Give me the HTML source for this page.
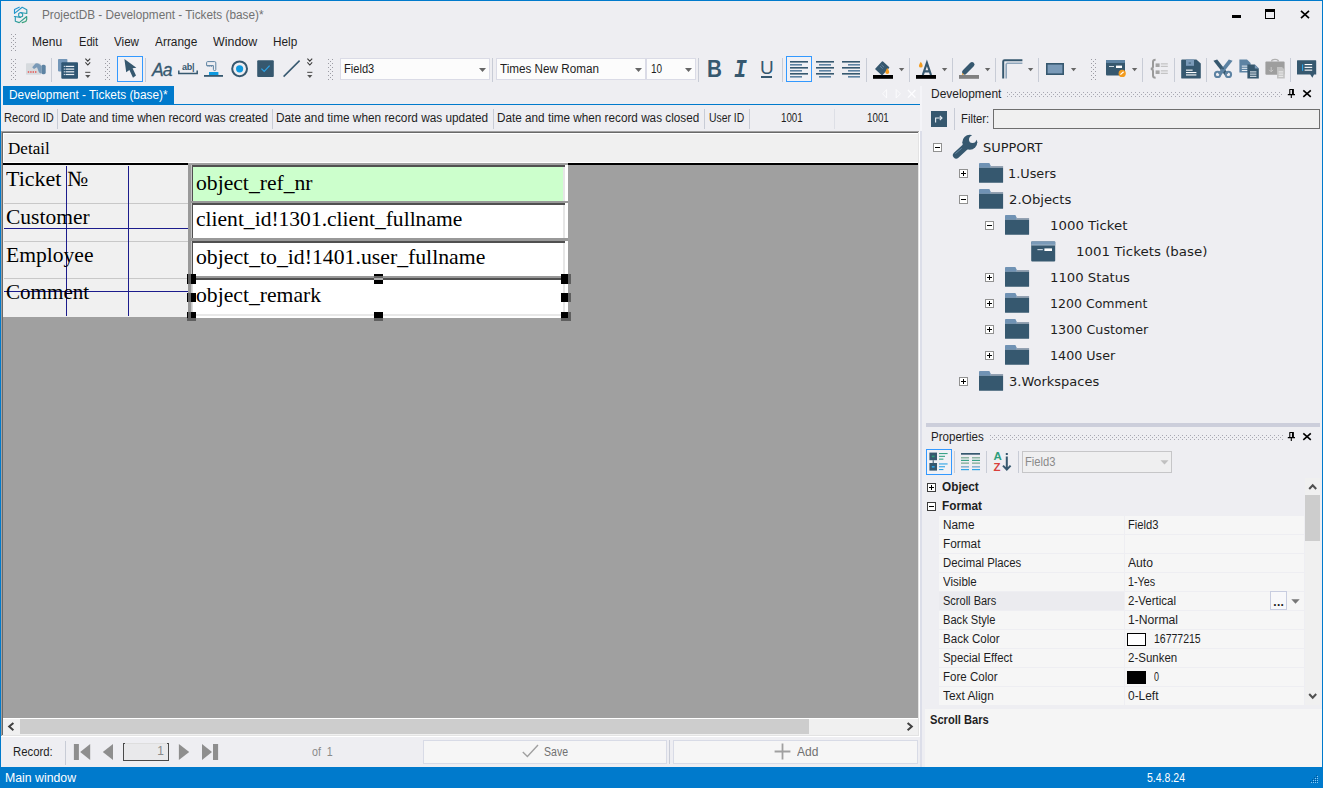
<!DOCTYPE html>
<html><head><meta charset="utf-8"><title>ProjectDB - Development - Tickets (base)*</title>
<style>
html,body{margin:0;padding:0;}
body{width:1323px;height:788px;overflow:hidden;background:#eeeef2;font-family:"Liberation Sans",sans-serif;font-size:12px;color:#1e1e1e;position:relative;}
.a{position:absolute;}
.t{position:absolute;white-space:nowrap;line-height:16px;height:16px;}
.sep{position:absolute;width:1px;background:#c8ccd6;}
.serif{font-family:"Liberation Serif",serif;color:#000;}
.tree{font-family:"DejaVu Sans",sans-serif;font-size:13px;color:#1e1e1e;}
svg{position:absolute;overflow:visible;}
.cell{position:absolute;background:#f6f6f6;height:18px;}
.pn{position:absolute;left:942px;white-space:nowrap;line-height:16px;}
.pv{position:absolute;left:1128px;white-space:nowrap;line-height:16px;}
.h{position:absolute;background:#000;}
</style></head><body>
<svg width="0" height="0" style="left:0;top:0"><defs>
<pattern id="gp" width="4" height="4" patternUnits="userSpaceOnUse"><rect x="0" y="0" width="1" height="1" fill="#9c9ca4"></rect><rect x="2" y="2" width="1" height="1" fill="#9c9ca4"></rect></pattern>
<pattern id="gp2" width="4" height="4" patternUnits="userSpaceOnUse"><rect x="0" y="0" width="1" height="1" fill="#a8a8b2"></rect><rect x="2" y="2" width="1" height="1" fill="#a8a8b2"></rect></pattern>
</defs></svg>
<!-- window border -->
<div class="a" style="left:0;top:0;width:1323px;height:1px;background:#007acc"></div>
<div class="a" style="left:0;top:0;width:1px;height:788px;background:#007acc"></div>
<div class="a" style="left:1322px;top:0;width:1px;height:788px;background:#007acc"></div>

<!-- TITLE BAR -->
<div id="titlebar">
<svg style="left:8px;top:2px" width="30" height="26" viewBox="0 0 30 26"><defs><linearGradient id="lg" gradientUnits="userSpaceOnUse" x1="6" y1="5" x2="19" y2="21"><stop offset="0" stop-color="#1c92e0"></stop><stop offset="0.5" stop-color="#2a9bb4"></stop><stop offset="1" stop-color="#3aa266"></stop></linearGradient></defs>
<g fill="none" stroke="url(#lg)" stroke-width="1.15" stroke-linejoin="round" stroke-linecap="round"><path d="M11.2 5.2 L6.5 7.5 V11.4 L14.2 5.3 L18.8 7.7 V11.5 L12.4 10.5"></path><path d="M10.7 11.5 L12.6 10.6 L14.6 11.7 V14.2 L12.4 15.3 L10.7 14.3 Z"></path><path d="M6.4 14.5 L12.4 15.4"></path><path d="M7.3 14.8 V19.3 L11.2 20.6 L18.7 14.5 V17.4 L17.8 19.5 L14.2 20.6"></path></g></svg>

<div class="t" id="title" style="left: 42.3px; top: 7px; color: rgb(113, 113, 113); transform: scaleX(0.9826); transform-origin: 0px 50%;">ProjectDB - Development - Tickets (base)*</div>
<div class="a" style="left:1232px;top:15px;width:9px;height:3px;background:#000"></div>
<div class="a" style="left:1265px;top:9px;width:8px;height:6px;border:1px solid #000;border-top:3px solid #000"></div>
<svg style="left:1300px;top:10px" width="10" height="9" viewBox="0 0 10 9"><path d="M1 0.8 L9 8.2 M9 0.8 L1 8.2" stroke="#000" stroke-width="1.7"></path></svg>
</div>

<!-- MENU -->
<div id="menubar">
<svg style="left:11px;top:34px" width="5" height="17"><rect width="5" height="17" fill="url(#gp)"></rect></svg>
<div class="t" style="left: 31.5px; top: 34px; transform: scaleX(1.0023); transform-origin: 0px 50%;">Menu</div>
<div class="t" style="left: 78.7px; top: 34px; transform: scaleX(0.9233); transform-origin: 0px 50%;">Edit</div>
<div class="t" style="left: 114px; top: 34px; transform: scaleX(0.9691); transform-origin: 0px 50%;">View</div>
<div class="t" style="left: 155px; top: 34px; transform: scaleX(0.9906); transform-origin: 0px 50%;">Arrange</div>
<div class="t" style="left: 212.8px; top: 34px; transform: scaleX(1.0354); transform-origin: 0px 50%;">Window</div>
<div class="t" style="left: 273.2px; top: 34px; transform: scaleX(0.9803); transform-origin: 0px 50%;">Help</div>
</div>

<!-- TOOLBAR -->
<div id="toolbar">
<!-- grips -->
<svg style="left:11px;top:59px" width="5" height="22"><rect width="5" height="22" fill="url(#gp)"></rect></svg>
<svg style="left:105px;top:59px" width="5" height="22"><rect width="5" height="22" fill="url(#gp)"></rect></svg>
<svg style="left:328px;top:59px" width="5" height="22"><rect width="5" height="22" fill="url(#gp)"></rect></svg>
<svg style="left:1091px;top:59px" width="5" height="22"><rect width="5" height="22" fill="url(#gp)"></rect></svg>
<!-- separators -->
<div class="sep" style="left:51px;top:58px;height:24px"></div>
<div class="sep" style="left:145px;top:58px;height:24px"></div>
<div class="sep" style="left:492px;top:58px;height:24px"></div>
<div class="sep" style="left:698px;top:58px;height:24px"></div>
<div class="sep" style="left:782px;top:58px;height:24px"></div>
<div class="sep" style="left:866px;top:58px;height:24px"></div>
<div class="sep" style="left:909px;top:58px;height:24px"></div>
<div class="sep" style="left:952px;top:58px;height:24px"></div>
<div class="sep" style="left:995px;top:58px;height:24px"></div>
<div class="sep" style="left:1038px;top:58px;height:24px"></div>
<div class="sep" style="left:1142px;top:58px;height:24px"></div>
<div class="sep" style="left:1174px;top:58px;height:24px"></div>
<div class="sep" style="left:1206px;top:58px;height:24px"></div>
<div class="sep" style="left:1290px;top:58px;height:24px"></div>
<!-- login icon (disabled) -->
<svg style="left:26px;top:61px" width="20" height="16" viewBox="0 0 20 16"><rect x="0" y="2.3" width="15" height="11.4" rx="0.8" fill="#d6dade"></rect><path d="M1.8 10.3h1.4v1.4H1.8zM4.2 10.3h1.4v1.4H4.2zM6.6 10.3h1.4v1.4H6.6zM9 10.3h1.4v1.4H9z" fill="#e8534f"></path><path d="M6.2 6.2 L9.5 2.6 Q11.5 1.8 13.5 3.2 L15 4.6 L15 12.5 L13 11.5 L11 6.2 L8 8 Z" fill="#7a9ab8"></path><rect x="15.3" y="3.8" width="4.4" height="9.4" rx="1.6" fill="#5d83a3"></rect></svg>
<!-- forms list icon -->
<svg style="left:58px;top:59px" width="20" height="20" viewBox="0 0 20 20"><rect x="0" y="0" width="9.4" height="12.4" rx="0.8" fill="#7396b8"></rect><rect x="3.3" y="3.2" width="16.7" height="16.6" rx="1" fill="#2f5673"></rect><g fill="#e8eef4"><rect x="7.6" y="6.8" width="8.6" height="1.2"></rect><rect x="7.6" y="9.5" width="8.6" height="1.2"></rect><rect x="7.6" y="12.2" width="8.6" height="1.2"></rect><rect x="7.6" y="14.9" width="8.6" height="1.2"></rect><rect x="5.8" y="6.8" width="1" height="1.2"></rect><rect x="5.8" y="9.5" width="1" height="1.2"></rect><rect x="5.8" y="12.2" width="1" height="1.2"></rect><rect x="5.8" y="14.9" width="1" height="1.2"></rect></g></svg>
<!-- overflow chevrons 1 -->
<svg style="left:84px;top:58px" width="8" height="22" viewBox="0 0 8 22"><path d="M1.4 0.6 L3.8 3.2 L6.2 0.6 M1.4 4.4 L3.8 7 L6.2 4.4" stroke="#3c3c3c" stroke-width="1.1" fill="none"></path><rect x="1.2" y="13.8" width="5.2" height="1.1" fill="#555"></rect><path d="M1.2 17 L6.4 17 L3.8 20 Z" fill="#555"></path></svg>
<!-- pointer selected -->
<div class="a" style="left:117px;top:56px;width:24px;height:24px;border:1px solid #3399ff;background:#f1f1f5"></div>
<svg style="left:123px;top:58px" width="14" height="21" viewBox="0 0 14 21"><path d="M1.4 1 L3.2 14.2 L6.4 12 L10 19.8 L13 17.6 L9.6 10.2 L13.4 9.8 Z" fill="#36586f"></path></svg>
<!-- Aa -->
<div class="t" style="left:152px;top:57.5px;font-size:17.5px;line-height:24px;height:24px;font-style:italic;color:#36586f;letter-spacing:-1px;-webkit-text-stroke:0.3px #36586f">Aa</div>
<!-- ab| textbox -->
<div class="t" style="left:182px;top:61px;font-size:9px;line-height:12px;height:12px;font-weight:bold;color:#36586f;letter-spacing:-0.2px">ab|</div>
<svg style="left:178px;top:70px" width="20" height="5" viewBox="0 0 20 5"><path d="M0.8 0.5 V3.6 H19.2 V0.5" stroke="#36586f" stroke-width="1.5" fill="none"></path></svg>
<!-- button icon -->
<svg style="left:204px;top:60px" width="20" height="18" viewBox="0 0 20 18"><rect x="0" y="15" width="19" height="1.8" fill="#36586f"></rect><rect x="5" y="12" width="9.4" height="3" fill="#0e9ae0"></rect><path d="M2.6 5.6 V2.6 Q2.6 1.6 3.6 1.6 H10.6 Q11.8 1.6 11.8 2.8 V9.6 Q11.8 10.6 10.6 10.6 Q9.4 10.6 9.4 9.4 V5.6 Z" stroke="#5d83a3" stroke-width="1" fill="none"></path><path d="M4 5.6V7M5.8 5.6V7M7.6 5.6V7" stroke="#5d83a3" stroke-width="0.8"></path></svg>
<!-- radio -->
<svg style="left:230px;top:59px" width="20" height="20" viewBox="0 0 20 20"><circle cx="9.6" cy="9.8" r="7.4" stroke="#36586f" stroke-width="2" fill="none"></circle><circle cx="9.6" cy="9.8" r="3.6" fill="#0e9ae0"></circle></svg>
<!-- checkbox -->
<svg style="left:257px;top:60px" width="18" height="18" viewBox="0 0 18 18"><rect x="0.2" y="0.3" width="16.6" height="16.6" rx="1" fill="#36586f"></rect><path d="M4.4 8.6 L7.2 11.4 L12.6 5.6" stroke="#2ea3e6" stroke-width="1.2" fill="none"></path></svg>
<!-- line -->
<svg style="left:282px;top:59px" width="20" height="20" viewBox="0 0 20 20"><path d="M1.6 17.6 L17.6 1.6" stroke="#36586f" stroke-width="1.5"></path></svg>
<!-- overflow chevrons 2 -->
<svg style="left:306px;top:58px" width="8" height="22" viewBox="0 0 8 22"><path d="M1.4 0.6 L3.8 3.2 L6.2 0.6 M1.4 4.4 L3.8 7 L6.2 4.4" stroke="#3c3c3c" stroke-width="1.1" fill="none"></path><rect x="1.2" y="13.8" width="5.2" height="1.1" fill="#555"></rect><path d="M1.2 17 L6.4 17 L3.8 20 Z" fill="#555"></path></svg>
<!-- combos -->
<div class="a" style="left:340px;top:58px;width:148px;height:20px;border:1px solid #dadbe6;background:#fcfcfc"></div>
<div class="t" style="left: 343.5px; top: 61px; transform: scaleX(0.927); transform-origin: 0px 50%;">Field3</div>
<svg style="left:478px;top:67px" width="9" height="5" viewBox="0 0 9 5"><path d="M1 0.9 H8 L4.5 4.9 Z" fill="#666"></path></svg>
<div class="a" style="left:496px;top:58px;width:148px;height:20px;border:1px solid #dadbe6;background:#fcfcfc"></div>
<div class="t" style="left: 500.3px; top: 61px; transform: scaleX(0.9736); transform-origin: 0px 50%;">Times New Roman</div>
<svg style="left:634px;top:67px" width="9" height="5" viewBox="0 0 9 5"><path d="M1 0.9 H8 L4.5 4.9 Z" fill="#666"></path></svg>
<div class="a" style="left:646px;top:58px;width:48px;height:20px;border:1px solid #dadbe6;background:#fcfcfc"></div>
<div class="t" style="left: 650.5px; top: 61px; transform: scaleX(0.8309); transform-origin: 0px 50%;">10</div>
<svg style="left:684px;top:67px" width="9" height="5" viewBox="0 0 9 5"><path d="M1 0.9 H8 L4.5 4.9 Z" fill="#666"></path></svg>
<!-- B I U -->
<div class="t" style="left:706.5px;top:56px;font-size:23.5px;line-height:26px;height:26px;font-weight:bold;color:#36586f;transform:scaleX(0.88);transform-origin:0 0">B</div>
<div class="t" style="left:734px;top:58px;font-family:'Liberation Mono',monospace;font-size:25px;transform:scaleX(0.85);transform-origin:0 0;line-height:26px;height:26px;font-weight:bold;font-style:italic;color:#36586f">I</div>
<div class="t" style="left:760px;top:56px;font-size:19px;line-height:24px;height:24px;color:#36586f">U</div>
<div class="a" style="left:761px;top:76px;width:11px;height:1.6px;background:#36586f"></div>
<!-- align -->
<div class="a" style="left:786px;top:56px;width:24px;height:24px;border:1px solid #3399ff;background:#f1f1f5"></div>
<svg style="left:790px;top:60px" width="19" height="18" viewBox="0 0 19 18"><g fill="#36586f"><rect x="0" y="1" width="18" height="1.6"></rect><rect x="0" y="4" width="12" height="1.6" fill="#5d83a3"></rect><rect x="0" y="7" width="18" height="1.6"></rect><rect x="0" y="10" width="12" height="1.6" fill="#5d83a3"></rect><rect x="0" y="13" width="18" height="1.6"></rect><rect x="0" y="16" width="12" height="1.6" fill="#5d83a3"></rect></g></svg>
<svg style="left:816px;top:60px" width="19" height="18" viewBox="0 0 19 18"><g fill="#36586f"><rect x="0" y="1" width="18" height="1.6"></rect><rect x="3" y="4" width="12" height="1.6" fill="#5d83a3"></rect><rect x="0" y="7" width="18" height="1.6"></rect><rect x="3" y="10" width="12" height="1.6" fill="#5d83a3"></rect><rect x="0" y="13" width="18" height="1.6"></rect><rect x="3" y="16" width="12" height="1.6" fill="#5d83a3"></rect></g></svg>
<svg style="left:842px;top:60px" width="19" height="18" viewBox="0 0 19 18"><g fill="#36586f"><rect x="0" y="1" width="18" height="1.6"></rect><rect x="6" y="4" width="12" height="1.6" fill="#5d83a3"></rect><rect x="0" y="7" width="18" height="1.6"></rect><rect x="6" y="10" width="12" height="1.6" fill="#5d83a3"></rect><rect x="0" y="13" width="18" height="1.6"></rect><rect x="6" y="16" width="12" height="1.6" fill="#5d83a3"></rect></g></svg>
<!-- fill color -->
<svg style="left:873px;top:60px" width="20" height="20" viewBox="0 0 20 20"><rect x="0" y="15" width="20" height="3.8" fill="#000"></rect><path d="M9.5 2 L15.5 7.5 L9 14.5 L3 9 Z" fill="#36586f" stroke="#36586f" stroke-width="1.6" stroke-linejoin="round"></path><path d="M7 6.2 L9.6 8.6 M8.4 4.8 L11 7.2" stroke="#7a9ab8" stroke-width="0.7"></path><path d="M14.3 8 Q16.5 10.8 16.3 12.2 Q16.1 13.9 14.3 13.9 Q12.5 13.9 12.3 12.2 Q12.3 10.8 14.3 8Z" fill="#f39c1f"></path></svg>
<svg style="left:897px;top:67px" width="9" height="5" viewBox="0 0 9 5"><path d="M1.9 1 H7.3 L4.6 4.2 Z" fill="#666"></path></svg>
<!-- font color -->
<svg style="left:916px;top:60px" width="20" height="20" viewBox="0 0 20 20"><rect x="0" y="15" width="20" height="3.8" fill="#000"></rect><path d="M6.8 15 L10.9 3 L15 15 M8.4 11.4 H13.4" stroke="#36586f" stroke-width="2.2" fill="none"></path><path d="M4.8 1.8 Q6.9 4.6 6.7 5.9 Q6.5 7.5 4.8 7.5 Q3.1 7.5 2.9 5.9 Q2.9 4.6 4.8 1.8Z" fill="#f39c1f"></path></svg>
<svg style="left:940px;top:67px" width="9" height="5" viewBox="0 0 9 5"><path d="M1.9 1 H7.3 L4.6 4.2 Z" fill="#666"></path></svg>
<!-- pen/border color -->
<svg style="left:959px;top:60px" width="20" height="20" viewBox="0 0 20 20"><rect x="0" y="15" width="20" height="3.8" fill="#808080"></rect><path d="M13 4.6 L5.6 12" stroke="#36586f" stroke-width="5" stroke-linecap="round"></path><path d="M3.4 14.2 L4.4 11 L6.8 13.2 Z" fill="#36586f"></path><path d="M2.8 14.9 L3.5 12.9 L5 14.3 Z" fill="#f39c1f"></path></svg>
<svg style="left:983px;top:67px" width="9" height="5" viewBox="0 0 9 5"><path d="M1.9 1 H7.3 L4.6 4.2 Z" fill="#666"></path></svg>
<!-- corner -->
<svg style="left:1002px;top:59px" width="21" height="20" viewBox="0 0 21 20"><path d="M1.2 19.4 V2.6 Q1.2 1.2 2.6 1.2 H20.4" stroke="#36586f" stroke-width="2" fill="none"></path><path d="M4.2 19.4 V5.4 Q4.2 4.2 5.4 4.2 H20.4" stroke="#8fa6bb" stroke-width="1.6" fill="none"></path></svg>
<svg style="left:1026px;top:67px" width="9" height="5" viewBox="0 0 9 5"><path d="M1.9 1 H7.3 L4.6 4.2 Z" fill="#666"></path></svg>
<!-- rectangle -->
<svg style="left:1046px;top:63px" width="18" height="12" viewBox="0 0 18 12"><rect x="0.8" y="0.8" width="16.4" height="10.4" fill="#7a9ab8" stroke="#36586f" stroke-width="1.6"></rect></svg>
<svg style="left:1069px;top:67px" width="9" height="5" viewBox="0 0 9 5"><path d="M1.9 1 H7.3 L4.6 4.2 Z" fill="#666"></path></svg>
<!-- form icon -->
<svg style="left:1106px;top:60px" width="21" height="18" viewBox="0 0 21 18"><rect x="0" y="0" width="19" height="15.6" rx="1" fill="#36586f"></rect><rect x="0" y="0" width="19" height="3" rx="0.8" fill="#5d83a3"></rect><rect x="3" y="6" width="5" height="1" fill="#cfd9e2"></rect><rect x="10" y="5.6" width="6" height="2.4" fill="#fff"></rect><circle cx="16.2" cy="13.4" r="3.6" fill="#f39c1f"></circle><path d="M14.4 14.6 L17.6 11.8" stroke="#fff" stroke-width="1.2"></path></svg>
<svg style="left:1130px;top:67px" width="9" height="5" viewBox="0 0 9 5"><path d="M1.9 1 H7.3 L4.6 4.2 Z" fill="#666"></path></svg>
<!-- braces icon (disabled) -->
<svg style="left:1150px;top:59px" width="19" height="20" viewBox="0 0 19 20"><path d="M5.6 0.8 Q3 0.8 3 3 V7.4 Q3 9.6 0.8 9.8 Q3 10 3 12.2 V16.6 Q3 18.8 5.6 18.8" stroke="#9a9a9a" stroke-width="2" fill="none"></path><rect x="5.6" y="4.4" width="4" height="3.6" fill="#a4a4a4"></rect><rect x="5.6" y="11.4" width="4" height="3.6" fill="#a4a4a4"></rect><rect x="10.8" y="4.4" width="7" height="1" fill="#b8b8b8"></rect><rect x="10.8" y="6.8" width="7" height="1" fill="#b8b8b8"></rect><rect x="10.8" y="11.4" width="7" height="1" fill="#b8b8b8"></rect><rect x="10.8" y="13.8" width="7" height="1" fill="#b8b8b8"></rect></svg>
<!-- save -->
<svg style="left:1181px;top:59px" width="20" height="20" viewBox="0 0 20 20"><path d="M1.2 0.4 H15.4 L19.8 4.6 V18.4 Q19.8 19.6 18.6 19.6 H1.2 Q0.2 19.6 0.2 18.4 V1.4 Q0.2 0.4 1.2 0.4 Z" fill="#36586f"></path><rect x="5" y="0.4" width="8" height="6.4" fill="#7a9ab8"></rect><rect x="7.6" y="3.6" width="2.4" height="0.9" fill="#36586f"></rect><g fill="#fff"><rect x="5" y="10.6" width="6.6" height="1.1"></rect><rect x="5" y="13" width="10.4" height="1.1"></rect><rect x="5" y="15.4" width="10.4" height="1.1"></rect></g></svg>
<!-- cut -->
<svg style="left:1213px;top:59px" width="20" height="20" viewBox="0 0 20 20"><path d="M0.4 1.8 L4.2 0.4 L15 14.2 L12 16.6 Z" fill="#36586f"></path><path d="M19.6 1.8 L15.8 0.4 L5 14.2 L8 16.6 Z" fill="#5d83a3"></path><circle cx="10" cy="9.4" r="0.9" fill="#36586f"></circle><circle cx="4.6" cy="15.4" r="2.7" stroke="#5d83a3" stroke-width="2" fill="none"></circle><circle cx="15.4" cy="15.4" r="2.7" stroke="#5d83a3" stroke-width="2" fill="none"></circle></svg>
<!-- copy -->
<svg style="left:1239px;top:59px" width="21" height="20" viewBox="0 0 21 20"><path d="M0.4 0.4 H8 L11.6 4 V13.6 H0.4 Z" fill="#5d83a3"></path><g fill="#e8eef4"><rect x="2.8" y="6.6" width="6" height="1"></rect><rect x="2.8" y="8.8" width="6" height="1"></rect><rect x="2.8" y="11" width="6" height="1"></rect></g><path d="M8.4 5.6 H15.8 L19.8 9.6 V19.6 H8.4 Z" fill="#36586f"></path><path d="M15.8 5.6 L19.8 9.6 H15.8 Z" fill="#7a9ab8"></path><g fill="#e8eef4"><rect x="11" y="12.4" width="6.4" height="1"></rect><rect x="11" y="14.6" width="6.4" height="1"></rect><rect x="11" y="16.8" width="6.4" height="1"></rect></g></svg>
<!-- paste (disabled) -->
<svg style="left:1265px;top:59px" width="21" height="20" viewBox="0 0 21 20"><rect x="0.4" y="2.4" width="19.2" height="13.4" rx="1" fill="#9e9e9e"></rect><path d="M6.6 2.4 Q6.6 0.4 10 0.4 Q13.4 0.4 13.4 2.4" stroke="#b0b0b0" stroke-width="1.4" fill="none"></path><path d="M6.2 8 V12.6 M4.2 10.8 L6.2 12.8 L8.2 10.8" stroke="#c8c8c8" stroke-width="1" fill="none"></path><path d="M12 8 H17 L19.8 10.8 V19.4 H12 Z" fill="#c2c2c2"></path><g fill="#eee"><rect x="13.6" y="12.4" width="4.6" height="1"></rect><rect x="13.6" y="14.6" width="4.6" height="1"></rect><rect x="13.6" y="16.8" width="4.6" height="1"></rect></g></svg>
<!-- comment icon -->
<svg style="left:1297px;top:60px" width="20" height="19" viewBox="0 0 20 19"><path d="M0.6 0.2 H18.6 Q19.2 0.2 19.2 0.8 V14.6 H17 L15.4 17.8 L13.2 14.6 H0.6 Q0 14.6 0 14 V0.8 Q0 0.2 0.6 0.2Z" fill="#36586f"></path><g fill="#fff"><rect x="7.6" y="4" width="7.6" height="1.1"></rect><rect x="7.6" y="6.8" width="7.6" height="1.1"></rect><rect x="7.6" y="9.6" width="7.6" height="1.1"></rect></g><rect x="5" y="4.4" width="1.1" height="6.4" fill="#2ea3e6"></rect></svg>
</div>

<!-- DOC TAB -->
<div id="doctab">
<div class="a" style="left:3px;top:86px;width:171px;height:19px;background:#007acc"></div>
<div class="a" style="left:3px;top:104px;width:917px;height:1px;background:#007acc"></div>
<div class="t" style="left: 9.4px; top: 87px; color: rgb(255, 255, 255); transform: scaleX(0.9867); transform-origin: 0px 50%;">Development - Tickets (base)*</div>
</div>

<!-- HEADER ROW -->
<div id="hdr">
<div class="t" style="left: 3.5px; top: 110px; transform: scaleX(0.9217); transform-origin: 0px 50%;">Record ID</div>
<div class="sep" style="left:57px;top:109px;height:20px"></div>
<div class="t" style="left: 61.3px; top: 110px; transform: scaleX(0.9759); transform-origin: 0px 50%;">Date and time when record was created</div>
<div class="sep" style="left:272px;top:109px;height:20px"></div>
<div class="t" style="left: 276.3px; top: 110px; transform: scaleX(0.9848); transform-origin: 0px 50%;">Date and time when record was updated</div>
<div class="sep" style="left:493px;top:109px;height:20px"></div>
<div class="t" style="left: 497.3px; top: 110px; transform: scaleX(0.9778); transform-origin: 0px 50%;">Date and time when record was closed</div>
<div class="sep" style="left:704px;top:109px;height:20px"></div>
<div class="t" style="left: 708.8px; top: 110px; transform: scaleX(0.8655); transform-origin: 0px 50%;">User ID</div>
<div class="sep" style="left:749px;top:109px;height:20px"></div>
<div class="t" style="left: 780.8px; top: 110px; transform: scaleX(0.8126); transform-origin: 0px 50%;">1001</div>
<div class="sep" style="left:834px;top:109px;height:20px;background:#dddfe6"></div>
<div class="t" style="left: 867px; top: 110px; transform: scaleX(0.8164); transform-origin: 0px 50%;">1001</div>
<!-- tab strip buttons -->
<svg style="left:879px;top:88px" width="40" height="12" viewBox="0 0 40 12"><path d="M7.6 1.6 L3.6 5.8 L7.6 10 Z" stroke="#fbfbfd" stroke-width="1" fill="none"></path><path d="M17.2 1.6 L21.4 5.8 L17.2 10 Z" stroke="#fbfbfd" stroke-width="1" fill="none"></path><path d="M29 2 L36.4 9.6 M36.4 2 L29 9.6" stroke="#fdfdff" stroke-width="1.3"></path></svg>
</div>

<!-- FORM AREA -->
<div id="form">
<div class="a" style="left:1px;top:131px;width:919px;height:606px;background:#a0a0a0"></div>
<div class="a" style="left:2px;top:132px;width:918px;height:604px;background:#696969"></div>
<div class="a" style="left:918px;top:132px;width:1px;height:604px;background:#e3e3e3"></div><div class="a" style="left:919px;top:131px;width:1px;height:606px;background:#fff"></div>
<div class="a" style="left:1px;top:736px;width:919px;height:1px;background:#fff"></div>
<div class="a" style="left:2px;top:735px;width:917px;height:1px;background:#e3e3e3"></div>
<div class="a" style="left:3px;top:133px;width:915px;height:585px;background:#a0a0a0"></div>
<!-- Detail band -->
<div class="a" style="left:3px;top:133px;width:915px;height:30px;background:#fff"></div>
<div class="a" style="left:4px;top:134px;width:914px;height:28px;background:#f0f0f0"></div>
<div class="t serif" style="left: 8.3px; top: 139px; font-size: 17.3px; line-height: 20px; height: 20px; transform: scaleX(0.9873); transform-origin: 0px 50%;">Detail</div>
<div class="a" style="left:3px;top:163px;width:915px;height:2px;background:#000"></div>
<!-- label area -->
<div class="a" style="left:3px;top:165px;width:185px;height:152px;background:#f0f0f0"></div>
<div class="a" style="left:4px;top:203px;width:187px;height:1px;background:#c8c8c8"></div>
<div class="a" style="left:4px;top:241px;width:184px;height:1px;background:#c8c8c8"></div>
<div class="a" style="left:4px;top:278px;width:184px;height:1px;background:#c8c8c8"></div>
<div class="a" style="left:4px;top:228px;width:184px;height:1px;background:#1c1c8c"></div>
<div class="a" style="left:4px;top:291px;width:184px;height:1px;background:#1c1c8c"></div>
<div class="a" style="left:66px;top:166px;width:1px;height:150px;background:#1c1c8c"></div>
<div class="a" style="left:128px;top:166px;width:1px;height:150px;background:#1c1c8c"></div>
<div class="t serif" style="left: 5.7px; top: 166.1px; font-size: 21.6px; line-height: 26px; height: 26px; transform: scaleX(1.0198); transform-origin: 0px 50%;">Ticket №</div>
<div class="t serif" style="left: 5.7px; top: 204.3px; font-size: 21.6px; line-height: 26px; height: 26px; transform: scaleX(0.9954); transform-origin: 0px 50%;">Customer</div>
<div class="t serif" style="left: 5.5px; top: 241.8px; font-size: 21.6px; line-height: 26px; height: 26px; transform: scaleX(0.9995); transform-origin: 0px 50%;">Employee</div>
<div class="t serif" style="left: 5.7px; top: 279.4px; font-size: 21.6px; line-height: 26px; height: 26px; transform: scaleX(0.9767); transform-origin: 0px 50%;">Comment</div>
<!-- fields: frame -->
<div class="a" style="left:188px;top:163px;width:380px;height:155px;background:#fff"></div>
<div class="a" style="left:188px;top:163px;width:3px;height:155px;background:#999"></div>
<div class="a" style="left:191px;top:165px;width:1px;height:153px;background:#c8c8c8"></div>
<div class="a" style="left:192px;top:165px;width:1px;height:113px;background:#505050"></div><div class="a" style="left:192px;top:278px;width:1px;height:38px;background:#dcdcdc"></div>
<div class="a" style="left:563px;top:167px;width:2px;height:149px;background:#e6e6e6"></div>
<!-- F1 -->
<div class="a" style="left:188px;top:163px;width:380px;height:2px;background:#a0a0a0"></div>
<div class="a" style="left:192px;top:165px;width:373px;height:2px;background:#505050"></div>
<div class="a" style="left:193px;top:167px;width:370px;height:34px;background:#ccffcc"></div>
<!-- F2 -->
<div class="a" style="left:191px;top:201px;width:377px;height:2px;background:#999"></div>
<div class="a" style="left:192px;top:203px;width:373px;height:2px;background:#505050"></div>
<!-- F3 -->
<div class="a" style="left:191px;top:238px;width:377px;height:3px;background:#999"></div>
<div class="a" style="left:192px;top:241px;width:373px;height:2px;background:#505050"></div>
<!-- F4 -->
<div class="a" style="left:191px;top:276px;width:377px;height:2px;background:#999"></div>
<div class="a" style="left:192px;top:278px;width:373px;height:2px;background:#505050"></div>
<div class="a" style="left:193px;top:314px;width:372px;height:2px;background:#e8e8e8"></div>
<div class="t serif" style="left: 195.5px; top: 170.2px; font-size: 21.7px; line-height: 26px; height: 26px; transform: scaleX(0.998); transform-origin: 0px 50%;">object_ref_nr</div>
<div class="t serif" style="left: 195.5px; top: 206.3px; font-size: 21.7px; line-height: 26px; height: 26px; transform: scaleX(0.9936); transform-origin: 0px 50%;">client_id!1301.client_fullname</div>
<div class="t serif" style="left: 195.5px; top: 244.3px; font-size: 21.7px; line-height: 26px; height: 26px; transform: scaleX(1.0028); transform-origin: 0px 50%;">object_to_id!1401.user_fullname</div>
<div class="t serif" style="left: 195.5px; top: 281.8px; font-size: 21.7px; line-height: 26px; height: 26px; transform: scaleX(0.9988); transform-origin: 0px 50%;">object_remark</div>
<!-- handles (XOR-like) -->
<div class="h" style="left:187px;top:274px;width:9px;height:10px"></div><div class="a" style="left:188px;top:274px;width:3px;height:10px;background:#5f5f5f"></div>
<div class="h" style="left:187px;top:293px;width:9px;height:9px"></div><div class="a" style="left:188px;top:293px;width:3px;height:9px;background:#5f5f5f"></div>
<div class="h" style="left:187px;top:312px;width:9px;height:6px"></div><div class="a" style="left:188px;top:312px;width:3px;height:6px;background:#5f5f5f"></div><div class="a" style="left:187px;top:318px;width:9px;height:3px;background:#5f5f5f"></div>
<div class="h" style="left:374px;top:274px;width:9px;height:10px"></div><div class="a" style="left:374px;top:276px;width:9px;height:2px;background:#666"></div><div class="a" style="left:374px;top:278px;width:9px;height:2px;background:#afafaf"></div>
<div class="h" style="left:374px;top:312px;width:9px;height:6px"></div><div class="a" style="left:374px;top:318px;width:9px;height:3px;background:#5f5f5f"></div>
<div class="h" style="left:561px;top:274px;width:7px;height:10px"></div><div class="a" style="left:568px;top:274px;width:3px;height:10px;background:#5f5f5f"></div>
<div class="h" style="left:561px;top:293px;width:7px;height:9px"></div><div class="a" style="left:568px;top:293px;width:3px;height:9px;background:#5f5f5f"></div>
<div class="h" style="left:561px;top:312px;width:7px;height:6px"></div><div class="a" style="left:568px;top:312px;width:3px;height:6px;background:#5f5f5f"></div><div class="a" style="left:561px;top:318px;width:10px;height:3px;background:#5f5f5f"></div>
<!-- h scrollbar -->
<div class="a" style="left:3px;top:718px;width:915px;height:1px;background:#fff"></div><div class="a" style="left:3px;top:719px;width:915px;height:16px;background:#f0f0f0"></div>
<div class="a" style="left:20px;top:719px;width:789px;height:15px;background:#cdcdcd"></div>
<svg style="left:7px;top:722px" width="8" height="9" viewBox="0 0 8 9"><path d="M6.4 1 L2.2 4.6 L6.4 8.2" stroke="#404040" stroke-width="2" fill="none"></path></svg>
<svg style="left:906px;top:722px" width="8" height="9" viewBox="0 0 8 9"><path d="M1.6 1 L5.8 4.6 L1.6 8.2" stroke="#404040" stroke-width="2" fill="none"></path></svg>
</div>

<!-- RECORD NAV -->
<div id="nav">
<div class="t" style="left: 13.2px; top: 744px; transform: scaleX(0.9445); transform-origin: 0px 50%;">Record:</div>
<div class="sep" style="left:65px;top:741px;height:24px"></div>
<svg style="left:73px;top:744px" width="18" height="16" viewBox="0 0 18 16"><rect x="0.9" y="0" width="5" height="16" fill="#8e8e8e"></rect><path d="M17.2 0 V16 L7.2 8 Z" fill="#8e8e8e"></path></svg>
<svg style="left:102px;top:744px" width="12" height="16" viewBox="0 0 12 16"><path d="M11 0 V16 L0.8 8 Z" fill="#8e8e8e"></path></svg>
<div class="a" style="left:123px;top:743px;width:44px;height:16px;border:1px solid #4a4a4a;border-top:1px solid #dedede;background:#e9e9eb"></div>
<div class="a" style="left:123px;top:743px;width:2px;height:1px;background:#4a4a4a"></div><div class="a" style="left:167px;top:743px;width:2px;height:1px;background:#4a4a4a"></div>
<div class="t" style="left:125px;top:743px;width:39px;text-align:right;color:#8a8a8a">1</div>
<svg style="left:178px;top:744px" width="12" height="16" viewBox="0 0 12 16"><path d="M0.9 0 V16 L11.2 8 Z" fill="#8e8e8e"></path></svg>
<svg style="left:202px;top:744px" width="18" height="16" viewBox="0 0 18 16"><rect x="11" y="0" width="5.1" height="16" fill="#8e8e8e"></rect><path d="M0 0 V16 L10 8 Z" fill="#8e8e8e"></path></svg>
<div class="t" style="left: 311.8px; top: 744px; color: rgb(138, 138, 138); transform: scaleX(0.8904); transform-origin: 0px 50%;">of&nbsp;&nbsp;1</div>
<div class="a" style="left:423px;top:740px;width:242px;height:22px;border:1px solid #d8dbe6;background:#f6f6f6"></div><div class="sep" style="left:669px;top:740px;height:24px"></div>
<svg style="left:522px;top:744px" width="17" height="14" viewBox="0 0 17 14"><path d="M0.8 8 L5.4 12.4 L16 1" stroke="#a0a0a0" stroke-width="1.4" fill="none"></path></svg>
<div class="t" style="left: 544px; top: 744px; color: rgb(113, 113, 113); transform: scaleX(0.8772); transform-origin: 0px 50%;">Save</div>
<div class="a" style="left:673px;top:740px;width:243px;height:22px;border:1px solid #d8dbe6;background:#f6f6f6"></div>
<svg style="left:774px;top:743px" width="17" height="17" viewBox="0 0 17 17"><path d="M8.5 0.6 V16.4 M0.6 8.5 H16.4" stroke="#a0a0a0" stroke-width="1.8"></path></svg>
<div class="t" style="left: 796.6px; top: 744px; color: rgb(113, 113, 113); transform: scaleX(1.0019); transform-origin: 0px 50%;">Add</div>
</div>

<div class="a" style="left:920px;top:86px;width:2px;height:45px;background:#f4f4f8"></div><div class="a" style="left:920px;top:131px;width:2px;height:636px;background:#dcdee9"></div>
<!-- RIGHT: DEVELOPMENT PANEL -->
<div id="dev">
<div class="t" style="left: 931.3px; top: 86px; transform: scaleX(0.9955); transform-origin: 0px 50%;">Development</div>
<svg style="left:1007px;top:92px" width="276" height="5"><rect width="276" height="5" fill="url(#gp2)"></rect></svg>
<svg style="left:1286px;top:88px" width="11" height="12" viewBox="0 0 11 12"><path d="M3.4 1.5 H7.6 M3.8 1.5 V6.4 M6.9 1.2 V6.4 M1.8 6.6 H9 M5.3 6.6 V9.9" stroke="#000" stroke-width="1.1" fill="none"></path><path d="M6.9 1.2 V6.4" stroke="#000" stroke-width="1.9"></path></svg>
<svg style="left:1301px;top:88px" width="12" height="12" viewBox="0 0 12 12"><path d="M2.3 2.3 L9.8 8.8 M9.8 2.3 L2.3 8.8" stroke="#000" stroke-width="1.6"></path></svg>
<!-- filter bar -->
<svg style="left:931px;top:111px" width="16" height="16" viewBox="0 0 16 16"><rect width="16" height="16" fill="#36586f"></rect><path d="M4.6 11.6 V7 H10.6 M8.8 4.8 L11 7 L8.8 9.2" stroke="#e6edf3" stroke-width="1.1" fill="none"></path></svg>
<div class="sep" style="left:954px;top:108px;height:22px"></div>
<div class="t" style="left: 961.3px; top: 111px; transform: scaleX(0.94); transform-origin: 0px 50%;">Filter:</div>
<div class="a" style="left:993px;top:109px;width:325px;height:18px;border:1px solid #6e6e6e;background:#f0f0f0"></div>
<svg style="left:933.0px;top:143.0px" width="9" height="9" viewBox="0 0 9 9"><rect x="0.5" y="0.5" width="8" height="8" fill="#fff" stroke="#919191"></rect><path d="M2 4.5 H7" stroke="#000"></path></svg>
<svg style="left:951px;top:133px" width="28" height="28" viewBox="0 0 28 28"><circle cx="18.8" cy="9.2" r="7.5" fill="#36586f"></circle><path d="M15 13.2 L5.2 22.2" stroke="#36586f" stroke-width="6.6" stroke-linecap="round"></path><circle cx="21.5" cy="6.4" r="3.5" fill="#eeeef2"></circle><path d="M21.5 6.4 L29 -1.2" stroke="#eeeef2" stroke-width="6.8"></path><path d="M4.4 20.6 L10.6 15.4" stroke="#7a9ab8" stroke-width="0.7"></path></svg>
<div class="t tree" style="left: 982.6px; top: 139.8px; transform: scaleX(0.9963); transform-origin: 0px 50%;">SUPPORT</div>
<svg style="left:959.0px;top:169.0px" width="9" height="9" viewBox="0 0 9 9"><rect x="0.5" y="0.5" width="8" height="8" fill="#fff" stroke="#919191"></rect><path d="M2 4.5 H7" stroke="#000"></path><path d="M4.5 2 V7" stroke="#000"></path></svg>
<svg style="left:979.0px;top:163.0px" width="25" height="21" viewBox="0 0 25 21"><path d="M0.8 0 H10.4 L11.8 3 H0 V0.8 Q0 0 0.8 0Z" fill="#7092b4"></path><rect x="0" y="2.9" width="11.8" height="1.9" fill="#7092b4"></rect><rect x="11.8" y="3" width="12.3" height="1.8" fill="#93a1b2"></rect><path d="M0 4.7 H24.1 V19.2 Q24.1 19.8 23.5 19.8 H0.6 Q0 19.8 0 19.2Z" fill="#36586f"></path></svg>
<div class="t tree" style="left: 1008.4px; top: 165.8px; transform: scaleX(0.9875); transform-origin: 0px 50%;">1.Users</div>
<svg style="left:959.0px;top:195.0px" width="9" height="9" viewBox="0 0 9 9"><rect x="0.5" y="0.5" width="8" height="8" fill="#fff" stroke="#919191"></rect><path d="M2 4.5 H7" stroke="#000"></path></svg>
<svg style="left:979.0px;top:189.0px" width="25" height="21" viewBox="0 0 25 21"><path d="M0.8 0 H10.4 L11.8 3 H0 V0.8 Q0 0 0.8 0Z" fill="#7092b4"></path><rect x="0" y="2.9" width="11.8" height="1.9" fill="#7092b4"></rect><rect x="11.8" y="3" width="12.3" height="1.8" fill="#93a1b2"></rect><path d="M0 4.7 H24.1 V19.2 Q24.1 19.8 23.5 19.8 H0.6 Q0 19.8 0 19.2Z" fill="#36586f"></path></svg>
<div class="t tree" style="left: 1009px; top: 191.8px; transform: scaleX(1.0144); transform-origin: 0px 50%;">2.Objects</div>
<svg style="left:985.0px;top:221.0px" width="9" height="9" viewBox="0 0 9 9"><rect x="0.5" y="0.5" width="8" height="8" fill="#fff" stroke="#919191"></rect><path d="M2 4.5 H7" stroke="#000"></path></svg>
<svg style="left:1005.0px;top:215.0px" width="25" height="21" viewBox="0 0 25 21"><path d="M0.8 0 H10.4 L11.8 3 H0 V0.8 Q0 0 0.8 0Z" fill="#7092b4"></path><rect x="0" y="2.9" width="11.8" height="1.9" fill="#7092b4"></rect><rect x="11.8" y="3" width="12.3" height="1.8" fill="#93a1b2"></rect><path d="M0 4.7 H24.1 V19.2 Q24.1 19.8 23.5 19.8 H0.6 Q0 19.8 0 19.2Z" fill="#36586f"></path></svg>
<div class="t tree" style="left: 1049.6px; top: 217.8px; transform: scaleX(1.0239); transform-origin: 0px 50%;">1000 Ticket</div>
<svg style="left:1031px;top:241.0px" width="25" height="21" viewBox="0 0 25 21"><rect x="0.2" y="0.4" width="24" height="20" rx="1" fill="#36586f"></rect><rect x="0.2" y="0.4" width="24" height="3.6" fill="#7a9ab8"></rect><rect x="0.2" y="3.6" width="24" height="0.9" fill="#a9bccd"></rect><rect x="6.4" y="8" width="5.4" height="1.2" fill="#c5d2de"></rect><rect x="13.4" y="7.4" width="7.6" height="2.6" fill="#fff"></rect></svg>
<div class="t tree" style="left: 1075.5px; top: 243.8px; transform: scaleX(1.0296); transform-origin: 0px 50%;">1001 Tickets (base)</div>
<svg style="left:985.0px;top:273.0px" width="9" height="9" viewBox="0 0 9 9"><rect x="0.5" y="0.5" width="8" height="8" fill="#fff" stroke="#919191"></rect><path d="M2 4.5 H7" stroke="#000"></path><path d="M4.5 2 V7" stroke="#000"></path></svg>
<svg style="left:1005.0px;top:267.0px" width="25" height="21" viewBox="0 0 25 21"><path d="M0.8 0 H10.4 L11.8 3 H0 V0.8 Q0 0 0.8 0Z" fill="#7092b4"></path><rect x="0" y="2.9" width="11.8" height="1.9" fill="#7092b4"></rect><rect x="11.8" y="3" width="12.3" height="1.8" fill="#93a1b2"></rect><path d="M0 4.7 H24.1 V19.2 Q24.1 19.8 23.5 19.8 H0.6 Q0 19.8 0 19.2Z" fill="#36586f"></path></svg>
<div class="t tree" style="left: 1049.6px; top: 269.8px; transform: scaleX(1.0171); transform-origin: 0px 50%;">1100 Status</div>
<svg style="left:985.0px;top:299.0px" width="9" height="9" viewBox="0 0 9 9"><rect x="0.5" y="0.5" width="8" height="8" fill="#fff" stroke="#919191"></rect><path d="M2 4.5 H7" stroke="#000"></path><path d="M4.5 2 V7" stroke="#000"></path></svg>
<svg style="left:1005.0px;top:293.0px" width="25" height="21" viewBox="0 0 25 21"><path d="M0.8 0 H10.4 L11.8 3 H0 V0.8 Q0 0 0.8 0Z" fill="#7092b4"></path><rect x="0" y="2.9" width="11.8" height="1.9" fill="#7092b4"></rect><rect x="11.8" y="3" width="12.3" height="1.8" fill="#93a1b2"></rect><path d="M0 4.7 H24.1 V19.2 Q24.1 19.8 23.5 19.8 H0.6 Q0 19.8 0 19.2Z" fill="#36586f"></path></svg>
<div class="t tree" style="left: 1049.6px; top: 295.8px; transform: scaleX(0.9651); transform-origin: 0px 50%;">1200 Comment</div>
<svg style="left:985.0px;top:325.0px" width="9" height="9" viewBox="0 0 9 9"><rect x="0.5" y="0.5" width="8" height="8" fill="#fff" stroke="#919191"></rect><path d="M2 4.5 H7" stroke="#000"></path><path d="M4.5 2 V7" stroke="#000"></path></svg>
<svg style="left:1005.0px;top:319.0px" width="25" height="21" viewBox="0 0 25 21"><path d="M0.8 0 H10.4 L11.8 3 H0 V0.8 Q0 0 0.8 0Z" fill="#7092b4"></path><rect x="0" y="2.9" width="11.8" height="1.9" fill="#7092b4"></rect><rect x="11.8" y="3" width="12.3" height="1.8" fill="#93a1b2"></rect><path d="M0 4.7 H24.1 V19.2 Q24.1 19.8 23.5 19.8 H0.6 Q0 19.8 0 19.2Z" fill="#36586f"></path></svg>
<div class="t tree" style="left: 1049.6px; top: 321.8px; transform: scaleX(0.9793); transform-origin: 0px 50%;">1300 Customer</div>
<svg style="left:985.0px;top:351.0px" width="9" height="9" viewBox="0 0 9 9"><rect x="0.5" y="0.5" width="8" height="8" fill="#fff" stroke="#919191"></rect><path d="M2 4.5 H7" stroke="#000"></path><path d="M4.5 2 V7" stroke="#000"></path></svg>
<svg style="left:1005.0px;top:345.0px" width="25" height="21" viewBox="0 0 25 21"><path d="M0.8 0 H10.4 L11.8 3 H0 V0.8 Q0 0 0.8 0Z" fill="#7092b4"></path><rect x="0" y="2.9" width="11.8" height="1.9" fill="#7092b4"></rect><rect x="11.8" y="3" width="12.3" height="1.8" fill="#93a1b2"></rect><path d="M0 4.7 H24.1 V19.2 Q24.1 19.8 23.5 19.8 H0.6 Q0 19.8 0 19.2Z" fill="#36586f"></path></svg>
<div class="t tree" style="left: 1049.6px; top: 347.8px; transform: scaleX(0.9752); transform-origin: 0px 50%;">1400 User</div>
<svg style="left:959.0px;top:377.0px" width="9" height="9" viewBox="0 0 9 9"><rect x="0.5" y="0.5" width="8" height="8" fill="#fff" stroke="#919191"></rect><path d="M2 4.5 H7" stroke="#000"></path><path d="M4.5 2 V7" stroke="#000"></path></svg>
<svg style="left:979.0px;top:371.0px" width="25" height="21" viewBox="0 0 25 21"><path d="M0.8 0 H10.4 L11.8 3 H0 V0.8 Q0 0 0.8 0Z" fill="#7092b4"></path><rect x="0" y="2.9" width="11.8" height="1.9" fill="#7092b4"></rect><rect x="11.8" y="3" width="12.3" height="1.8" fill="#93a1b2"></rect><path d="M0 4.7 H24.1 V19.2 Q24.1 19.8 23.5 19.8 H0.6 Q0 19.8 0 19.2Z" fill="#36586f"></path></svg>
<div class="t tree" style="left: 1008.6px; top: 373.8px; transform: scaleX(0.9996); transform-origin: 0px 50%;">3.Workspaces</div>
<div class="a" style="left:926px;top:423px;width:394px;height:4px;background:#cccedb"></div>
</div>

<!-- RIGHT: PROPERTIES PANEL -->
<div id="props">
<div class="t" style="left: 931.3px; top: 429px; transform: scaleX(0.9634); transform-origin: 0px 50%;">Properties</div>
<svg style="left:990px;top:435px" width="293" height="5"><rect width="293" height="5" fill="url(#gp2)"></rect></svg>
<svg style="left:1286px;top:431px" width="11" height="12" viewBox="0 0 11 12"><path d="M3.4 1.5 H7.6 M3.8 1.5 V6.4 M6.9 1.2 V6.4 M1.8 6.6 H9 M5.3 6.6 V9.9" stroke="#000" stroke-width="1.1" fill="none"></path><path d="M6.9 1.2 V6.4" stroke="#000" stroke-width="1.9"></path></svg>
<svg style="left:1301px;top:431px" width="12" height="12" viewBox="0 0 12 12"><path d="M2.3 2.3 L9.8 8.8 M9.8 2.3 L2.3 8.8" stroke="#000" stroke-width="1.6"></path></svg>
<!-- props toolbar -->
<div class="a" style="left:926px;top:449px;width:24px;height:24px;border:1px solid #3399ff;background:#f1f1f5"></div>
<svg style="left:929px;top:452px" width="20" height="20" viewBox="0 0 20 20"><rect x="0.4" y="0.6" width="7.6" height="7.6" fill="#36586f"></rect><rect x="0.4" y="11" width="7.6" height="7.6" fill="#36586f"></rect><rect x="3.7" y="8.2" width="1" height="2.8" fill="#36586f"></rect><rect x="2.8" y="3.6" width="2.8" height="1.6" fill="#2e9e7c"></rect><rect x="2.8" y="14" width="2.8" height="1.6" fill="#2ea3e6"></rect><g fill="#3aa386"><rect x="10" y="1" width="8.6" height="1.1"></rect><rect x="10" y="3.8" width="6" height="1.1"></rect><rect x="10" y="6.6" width="4.4" height="1.1"></rect></g><g fill="#2ea3e6"><rect x="10" y="11.4" width="8.6" height="1.1"></rect><rect x="10" y="14.2" width="6" height="1.1"></rect><rect x="10" y="17" width="4.4" height="1.1"></rect></g></svg>
<div class="sep" style="left:954px;top:451px;height:22px"></div>
<svg style="left:961px;top:452px" width="20" height="20" viewBox="0 0 20 20"><rect x="0" y="1" width="19" height="1.7" fill="#36586f"></rect><g fill="#8db5a3"><rect x="0" y="5" width="8" height="1.5"></rect><rect x="11" y="5" width="8" height="1.5"></rect><rect x="0" y="10.4" width="8" height="1.5"></rect><rect x="11" y="10.4" width="8" height="1.5"></rect></g><g fill="#3aa386"><rect x="0" y="7.8" width="8" height="1.2"></rect><rect x="11" y="7.8" width="8" height="1.2"></rect></g><g fill="#8ab4cf"><rect x="0" y="14" width="8" height="1.6"></rect><rect x="11" y="14" width="8" height="1.6"></rect></g><g fill="#2ea3e6"><rect x="0" y="17" width="8" height="1.2"></rect><rect x="11" y="17" width="8" height="1.2"></rect></g></svg>
<div class="sep" style="left:986px;top:451px;height:22px"></div>
<div class="t" style="left:993.4px;top:451px;font-size:11.5px;line-height:11px;height:11px;font-weight:bold;color:#2e9e7c">A</div>
<div class="t" style="left:993.6px;top:461.6px;font-size:11.5px;line-height:11px;height:11px;font-weight:bold;color:#d9403c">Z</div>
<svg style="left:1002px;top:452px" width="10" height="20" viewBox="0 0 10 20"><rect x="3.8" y="1" width="2" height="2" fill="#36586f"></rect><path d="M4.8 4.6 V17.6 M1 13.6 L4.8 17.6 L8.6 13.6" stroke="#36586f" stroke-width="2" fill="none"></path></svg>
<div class="sep" style="left:1018px;top:451px;height:22px"></div>
<div class="a" style="left:1022px;top:451px;width:148px;height:20px;border:1px solid #c6c6c8;background:#efeff0"></div>
<div class="t" style="left: 1025.2px; top: 454px; color: rgb(138, 138, 138); transform: scaleX(0.9331); transform-origin: 0px 50%;">Field3</div>
<svg style="left:1160px;top:460px" width="9" height="5" viewBox="0 0 9 5"><path d="M0.5 0.3 H8.5 L4.5 4.4 Z" fill="#c0c0c0"></path></svg>
<svg style="left:927px;top:483px" width="9" height="9" viewBox="0 0 9 9"><rect x="0.5" y="0.5" width="8" height="8" fill="#fff" stroke="#3c3c3c"></rect><path d="M2 4.5 H7" stroke="#000"></path><path d="M4.5 2 V7" stroke="#000"></path></svg>
<div class="pn" style="top: 478.5px; font-weight: bold; transform: scaleX(0.9854); left: 942px; transform-origin: 0px 50%;">Object</div>
<svg style="left:927px;top:502px" width="9" height="9" viewBox="0 0 9 9"><rect x="0.5" y="0.5" width="8" height="8" fill="#fff" stroke="#3c3c3c"></rect><path d="M2 4.5 H7" stroke="#000"></path></svg>
<div class="pn" style="top: 497.5px; font-weight: bold; transform: scaleX(0.9835); left: 942px; transform-origin: 0px 50%;">Format</div>
<div class="cell" style="left:939px;top:516.0px;width:185px;background:#f6f6f6"></div><div class="cell" style="left:1125px;top:516.0px;width:179px"></div>
<div class="pn" style="top: 516.5px; transform: scaleX(0.9839); left: 942.5px; transform-origin: 0px 50%;">Name</div><div class="pv" style="top: 516.5px; transform: scaleX(0.9331); left: 1128.3px; transform-origin: 0px 50%;">Field3</div>
<div class="cell" style="left:939px;top:535.0px;width:185px;background:#f6f6f6"></div><div class="cell" style="left:1125px;top:535.0px;width:179px"></div>
<div class="pn" style="top: 535.5px; transform: scaleX(0.9864); left: 942.5px; transform-origin: 0px 50%;">Format</div><div class="pv" style="top:535.5px"></div>
<div class="cell" style="left:939px;top:554.0px;width:185px;background:#f6f6f6"></div><div class="cell" style="left:1125px;top:554.0px;width:179px"></div>
<div class="pn" style="top: 554.5px; transform: scaleX(0.9468); left: 942.5px; transform-origin: 0px 50%;">Decimal Places</div><div class="pv" style="top: 554.5px; transform: scaleX(1.0127); left: 1128.3px; transform-origin: 0px 50%;">Auto</div>
<div class="cell" style="left:939px;top:573.0px;width:185px;background:#f6f6f6"></div><div class="cell" style="left:1125px;top:573.0px;width:179px"></div>
<div class="pn" style="top: 573.5px; transform: scaleX(0.9618); left: 942.5px; transform-origin: 0px 50%;">Visible</div><div class="pv" style="top: 573.5px; transform: scaleX(0.8992); left: 1128.3px; transform-origin: 0px 50%;">1-Yes</div>
<div class="cell" style="left:939px;top:592.0px;width:185px;background:#ebebef"></div><div class="cell" style="left:1125px;top:592.0px;width:179px"></div>
<div class="pn" style="top: 592.5px; transform: scaleX(0.9187); left: 942.5px; transform-origin: 0px 50%;">Scroll Bars</div><div class="pv" style="top: 592.5px; transform: scaleX(0.9594); left: 1128.3px; transform-origin: 0px 50%;">2-Vertical</div>
<div class="cell" style="left:939px;top:611.0px;width:185px;background:#f6f6f6"></div><div class="cell" style="left:1125px;top:611.0px;width:179px"></div>
<div class="pn" style="top: 611.5px; transform: scaleX(0.9259); left: 942.5px; transform-origin: 0px 50%;">Back Style</div><div class="pv" style="top: 611.5px; transform: scaleX(1.0133); left: 1128.3px; transform-origin: 0px 50%;">1-Normal</div>
<div class="cell" style="left:939px;top:630.0px;width:185px;background:#f6f6f6"></div><div class="cell" style="left:1125px;top:630.0px;width:179px"></div>
<div class="pn" style="top: 630.5px; transform: scaleX(0.9627); left: 942.5px; transform-origin: 0px 50%;">Back Color</div><div class="a" style="left:1127px;top:632.5px;width:17px;height:11px;border:1px solid #000;background:#fff"></div><div class="pv" style="left: 1153.8px; top: 630.5px; transform: scaleX(0.8747); transform-origin: 0px 50%;">16777215</div>
<div class="cell" style="left:939px;top:649.0px;width:185px;background:#f6f6f6"></div><div class="cell" style="left:1125px;top:649.0px;width:179px"></div>
<div class="pn" style="top: 649.5px; transform: scaleX(0.9473); left: 942.5px; transform-origin: 0px 50%;">Special Effect</div><div class="pv" style="top: 649.5px; transform: scaleX(0.9577); left: 1128.3px; transform-origin: 0px 50%;">2-Sunken</div>
<div class="cell" style="left:939px;top:668.0px;width:185px;background:#f6f6f6"></div><div class="cell" style="left:1125px;top:668.0px;width:179px"></div>
<div class="pn" style="top: 668.5px; transform: scaleX(0.9614); left: 942.5px; transform-origin: 0px 50%;">Fore Color</div><div class="a" style="left:1127px;top:670.5px;width:17px;height:11px;border:1px solid #000;background:#000"></div><div class="pv" style="left: 1153.8px; top: 668.5px; transform: scaleX(0.7477); transform-origin: 0px 50%;">0</div>
<div class="cell" style="left:939px;top:687.0px;width:185px;background:#f6f6f6"></div><div class="cell" style="left:1125px;top:687.0px;width:179px"></div>
<div class="pn" style="top: 687.5px; transform: scaleX(0.9888); left: 942.5px; transform-origin: 0px 50%;">Text Align</div><div class="pv" style="top: 687.5px; transform: scaleX(0.9939); left: 1128.3px; transform-origin: 0px 50%;">0-Left</div>
<div class="a" style="left:1270px;top:591.0px;width:15px;height:17px;border:1px solid #c8cde0;background:#f8f8fa"></div><div class="t" style="left:1273.3px;top:593.6px;font-weight:bold;letter-spacing:0.3px">...</div>
<svg style="left:1291px;top:598.5px" width="9" height="5" viewBox="0 0 9 5"><path d="M0.3 0.3 H8.7 L4.5 4.8 Z" fill="#777"></path></svg>
<div class="a" style="left:1305px;top:478px;width:15px;height:227px;background:#f0f0f0"></div>
<div class="a" style="left:1305px;top:495px;width:15px;height:46px;background:#cdcdcd"></div>
<svg style="left:1308px;top:483px" width="10" height="7" viewBox="0 0 10 7"><path d="M1.2 6 L4.7 2.2 L8.2 6" stroke="#505050" stroke-width="2" fill="none"></path></svg>
<svg style="left:1308px;top:693px" width="10" height="7" viewBox="0 0 10 7"><path d="M1.2 1 L4.7 4.8 L8.2 1" stroke="#505050" stroke-width="2" fill="none"></path></svg>
<div class="a" style="left:925px;top:709px;width:397px;height:58px;background:#f5f5f5"></div>
<div class="t" style="left: 929.8px; top: 712px; font-weight: bold; transform: scaleX(0.9278); transform-origin: 0px 50%;">Scroll Bars</div>
</div>

<!-- STATUS BAR -->
<div id="status">
<div class="a" style="left:0;top:767px;width:1323px;height:21px;background:#007acc"></div>
<svg style="left:1310px;top:775px" width="9" height="9" viewBox="0 0 9 9"><rect x="6" y="0" width="1" height="1" fill="#005a9e"></rect><rect x="7" y="1" width="1" height="1" fill="#8cc8f2"></rect><rect x="4" y="2" width="1" height="1" fill="#005a9e"></rect><rect x="5" y="3" width="1" height="1" fill="#8cc8f2"></rect><rect x="6" y="2" width="1" height="1" fill="#005a9e"></rect><rect x="7" y="3" width="1" height="1" fill="#8cc8f2"></rect><rect x="2" y="4" width="1" height="1" fill="#005a9e"></rect><rect x="3" y="5" width="1" height="1" fill="#8cc8f2"></rect><rect x="4" y="4" width="1" height="1" fill="#005a9e"></rect><rect x="5" y="5" width="1" height="1" fill="#8cc8f2"></rect><rect x="6" y="4" width="1" height="1" fill="#005a9e"></rect><rect x="7" y="5" width="1" height="1" fill="#8cc8f2"></rect><rect x="0" y="6" width="1" height="1" fill="#005a9e"></rect><rect x="1" y="7" width="1" height="1" fill="#8cc8f2"></rect><rect x="2" y="6" width="1" height="1" fill="#005a9e"></rect><rect x="3" y="7" width="1" height="1" fill="#8cc8f2"></rect><rect x="4" y="6" width="1" height="1" fill="#005a9e"></rect><rect x="5" y="7" width="1" height="1" fill="#8cc8f2"></rect><rect x="6" y="6" width="1" height="1" fill="#005a9e"></rect><rect x="7" y="7" width="1" height="1" fill="#8cc8f2"></rect></svg>
<div class="t" style="left: 4.5px; top: 770px; color: rgb(255, 255, 255); transform: scaleX(1.0249); transform-origin: 0px 50%;">Main window</div>
<div class="t" style="left: 1147px; top: 770px; color: rgb(255, 255, 255); transform: scaleX(0.8761); transform-origin: 0px 50%;">5.4.8.24</div>
</div>

</body></html>
